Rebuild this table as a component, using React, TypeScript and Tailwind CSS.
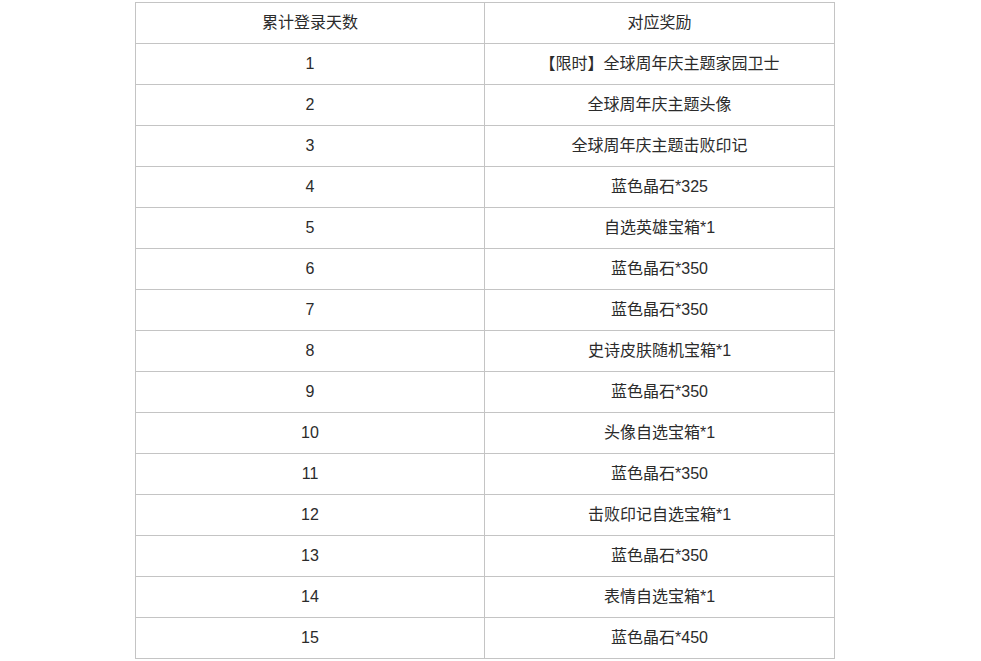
import React from "react";

const rows: [string, string][] = [
  ["1", "【限时】全球周年庆主题家园卫士"],
  ["2", "全球周年庆主题头像"],
  ["3", "全球周年庆主题击败印记"],
  ["4", "蓝色晶石*325"],
  ["5", "自选英雄宝箱*1"],
  ["6", "蓝色晶石*350"],
  ["7", "蓝色晶石*350"],
  ["8", "史诗皮肤随机宝箱*1"],
  ["9", "蓝色晶石*350"],
  ["10", "头像自选宝箱*1"],
  ["11", "蓝色晶石*350"],
  ["12", "击败印记自选宝箱*1"],
  ["13", "蓝色晶石*350"],
  ["14", "表情自选宝箱*1"],
  ["15", "蓝色晶石*450"],
];

export default function App() {
  return (
    <div
      className="w-[981px] h-[661px] bg-white overflow-hidden pt-[2px] pl-[135px]"
      style={{ fontFamily: '"Liberation Sans", "Noto Sans CJK SC", sans-serif' }}
    >
      <table className="border-collapse w-[699px] text-[16px] text-[#2b2b2b] table-fixed">
        <colgroup>
          <col className="w-[349px]" />
          <col className="w-[350px]" />
        </colgroup>
        <tbody>
          <tr className="h-[41px]">
            <td className="border border-[#c4c4c4] text-center align-middle p-0">累计登录天数</td>
            <td className="border border-[#c4c4c4] text-center align-middle p-0">对应奖励</td>
          </tr>
          {rows.map(([d, r], i) => (
            <tr key={i} className="h-[41px]">
              <td className="border border-[#c4c4c4] text-center align-middle p-0">{d}</td>
              <td className="border border-[#c4c4c4] text-center align-middle p-0">{r}</td>
            </tr>
          ))}
        </tbody>
      </table>
    </div>
  );
}
